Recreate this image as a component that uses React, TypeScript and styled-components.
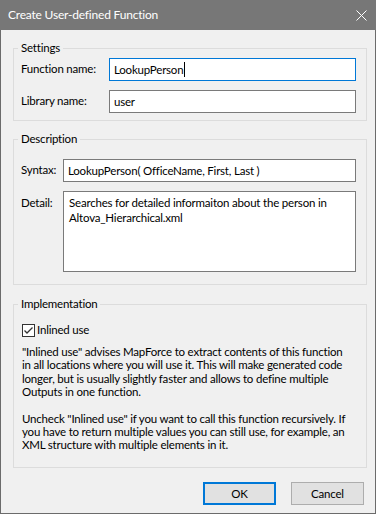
import React from 'react';
import styled, { createGlobalStyle } from 'styled-components';

const GlobalStyle = createGlobalStyle`
  html, body {
    margin: 0;
    padding: 0;
    background: #f0f0f0;
  }
  body {
    font-family: 'Segoe UI', Lato, sans-serif;
    font-size: 11.5px;
    letter-spacing: -0.2px;
    color: #000;
  }
`;

const Window = styled.div`
  width: 376px;
  height: 514px;
  box-sizing: border-box;
  border: 1px solid #6b6b6b;
  border-top: none;
  background: #f0f0f0;
  display: flex;
  flex-direction: column;
`;

const TitleBar = styled.div`
  height: 30px;
  flex: 0 0 30px;
  background: #777777;
  margin: 0 -1px;
  display: flex;
  align-items: center;
  justify-content: space-between;
  padding: 0 9px 0 8px;
  color: #ffffff;
  font-size: 12px;
`;

const Title = styled.span`
  line-height: 16px;
`;

const Body = styled.div`
  flex: 1;
  display: flex;
  flex-direction: column;
  padding: 10px 8px 0 12px;
`;

const Group = styled.fieldset<{ $gap: number }>`
  margin: 0 0 ${({ $gap }) => $gap}px 0;
  padding: 0;
  border: 1px solid #dcdcdc;
  min-width: 0;
`;

const Legend = styled.legend`
  margin-left: 4px;
  padding: 0 3px;
  line-height: 16px;
  color: #000;
`;

const FormGrid = styled.div<{ $labelWidth: number; $pad: string }>`
  display: grid;
  grid-template-columns: ${({ $labelWidth }) => $labelWidth}px 1fr;
  row-gap: 9px;
  align-items: start;
  padding: ${({ $pad }) => $pad};
`;

const Label = styled.span<{ $top: number }>`
  padding-top: ${({ $top }) => $top}px;
  line-height: 16px;
`;

const Field = styled.div<{ $focused?: boolean; $height: number; $multi?: boolean }>`
  box-sizing: border-box;
  height: ${({ $height }) => $height}px;
  background: #ffffff;
  border: 1px solid ${({ $focused }) => ($focused ? '#0078d7' : '#7a7a7a')};
  padding: ${({ $multi }) => ($multi ? '3px 5px' : '0 4px')};
  display: flex;
  align-items: ${({ $multi }) => ($multi ? 'flex-start' : 'center')};
  line-height: 15px;
  white-space: ${({ $multi }) => ($multi ? 'normal' : 'nowrap')};
  overflow: hidden;
`;

const Caret = styled.span`
  display: inline-block;
  width: 1px;
  height: 15px;
  background: #000;
  margin-left: 1px;
`;

const ImplBody = styled.div`
  padding: 10px 12px 15px 8px;
  display: flex;
  flex-direction: column;
`;

const CheckRow = styled.label`
  display: flex;
  align-items: center;
  gap: 2px;
  line-height: 16px;
  margin-bottom: 7px;
`;

const CheckBox = styled.span`
  box-sizing: border-box;
  width: 13px;
  height: 13px;
  border: 1px solid #333333;
  background: #ffffff;
  display: flex;
  align-items: center;
  justify-content: center;
`;

const Para = styled.p<{ $mb: number }>`
  margin: 0 0 ${({ $mb }) => $mb}px 0;
  line-height: 13.33px;
`;

const Footer = styled.div`
  display: flex;
  justify-content: flex-end;
  gap: 15px;
  padding: 14px 3px 0 0;
`;

const Button = styled.button<{ $default?: boolean }>`
  box-sizing: border-box;
  width: 73px;
  height: 23px;
  font-family: inherit;
  font-size: 11.5px;
  letter-spacing: inherit;
  color: #000;
  background: #e1e1e1;
  border: ${({ $default }) => ($default ? '2px solid #0078d7' : '1px solid #adadad')};
  padding: 0;
  border-radius: 0;
`;

const App = () => (
  <>
    <GlobalStyle />
    <Window>
      <TitleBar>
        <Title>Create User-defined Function</Title>
        <svg width="11" height="11" viewBox="0 0 11 11">
          <path d="M0.5 0.5 L10.5 10.5 M10.5 0.5 L0.5 10.5" stroke="#ffffff" strokeWidth="1" />
        </svg>
      </TitleBar>
      <Body>
        <Group $gap={10}>
          <Legend>Settings</Legend>
          <FormGrid $labelWidth={88} $pad="2px 10px 7px 7px">
            <Label $top={3}>Function name:</Label>
            <Field $focused $height={23}>
              LookupPerson
              <Caret />
            </Field>
            <Label $top={3}>Library name:</Label>
            <Field $height={23}>user</Field>
          </FormGrid>
        </Group>
        <Group $gap={11}>
          <Legend>Description</Legend>
          <FormGrid $labelWidth={42} $pad="12px 10px 12px 7px">
            <Label $top={3}>Syntax:</Label>
            <Field $height={23}>LookupPerson( OfficeName, First, Last )</Field>
            <Label $top={4}>Detail:</Label>
            <Field $multi $height={81}>
              Searches for detailed informaiton about the person in Altova_Hierarchical.xml
            </Field>
          </FormGrid>
        </Group>
        <Group $gap={0}>
          <Legend>Implementation</Legend>
          <ImplBody>
            <CheckRow>
              <CheckBox>
                <svg width="11" height="11" viewBox="0 0 11 11">
                  <path d="M1.5 5.5 L4 8 L9.5 2.5" stroke="#333333" strokeWidth="1.3" fill="none" />
                </svg>
              </CheckBox>
              Inlined use
            </CheckRow>
            <Para $mb={13.33}>
              "Inlined use" advises MapForce to extract contents of this function in all locations
              where you will use it. This will make generated code longer, but is usually slightly
              faster and allows to define multiple Outputs in one function.
            </Para>
            <Para $mb={0}>
              Uncheck "Inlined use" if you want to call this function recursively. If you have to
              return multiple values you can still use, for example, an XML structure with multiple
              elements in it.
            </Para>
          </ImplBody>
        </Group>
        <Footer>
          <Button $default>OK</Button>
          <Button>Cancel</Button>
        </Footer>
      </Body>
    </Window>
  </>
);

export default App;
